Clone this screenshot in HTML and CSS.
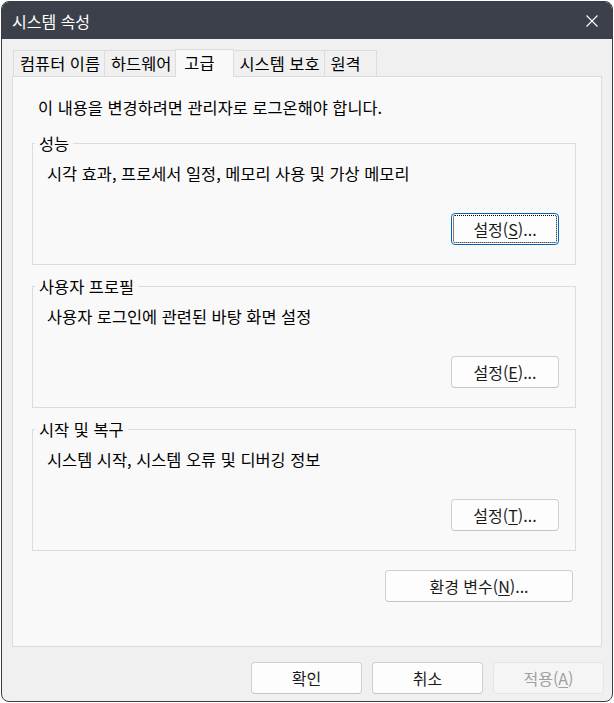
FILE: index.html
```html
<!DOCTYPE html>
<html lang="ko">
<head>
  <meta charset="UTF-8">
  <title>시스템 속성</title>
  <link rel="stylesheet" href="styles.css">
</head>
<body>
  <div class="window">
    <!-- Title bar -->
    <div class="titlebar">
      <span class="title">시스템 속성</span>
      <svg class="close" width="12" height="12" viewBox="0 0 12 12">
        <path d="M0.5 0.5 L11.5 11.5 M11.5 0.5 L0.5 11.5" stroke="#fff" stroke-width="1.1" fill="none"/>
      </svg>
    </div>

    <div class="content">
      <!-- Tabs -->
      <div class="tabs">
        <div class="tab">컴퓨터 이름</div>
        <div class="tab">하드웨어</div>
        <div class="tab active">고급</div>
        <div class="tab">시스템 보호</div>
        <div class="tab">원격</div>
      </div>

      <div class="panel">
        <p class="notice">이 내용을 변경하려면 관리자로 로그온해야 합니다.</p>

        <fieldset class="group">
          <legend>성능</legend>
          <p class="desc">시각 효과, 프로세서 일정, 메모리 사용 및 가상 메모리</p>
          <div class="group-actions">
            <button class="button focused">설정(<u>S</u>)...</button>
          </div>
        </fieldset>

        <fieldset class="group">
          <legend>사용자 프로필</legend>
          <p class="desc">사용자 로그인에 관련된 바탕 화면 설정</p>
          <div class="group-actions">
            <button class="button">설정(<u>E</u>)...</button>
          </div>
        </fieldset>

        <fieldset class="group">
          <legend>시작 및 복구</legend>
          <p class="desc">시스템 시작, 시스템 오류 및 디버깅 정보</p>
          <div class="group-actions">
            <button class="button">설정(<u>T</u>)...</button>
          </div>
        </fieldset>

        <div class="env-row">
          <button class="button wide">환경 변수(<u>N</u>)...</button>
        </div>
      </div>

      <!-- Dialog buttons -->
      <div class="footer">
        <button class="button dialog">확인</button>
        <button class="button dialog">취소</button>
        <button class="button dialog" disabled>적용(<u>A</u>)</button>
      </div>
    </div>
  </div>
</body>
</html>
```

FILE: styles.css
```css
* {
  margin: 0;
  padding: 0;
  box-sizing: border-box;
}

body {
  background: #fff;
  font-family: "Noto Sans CJK KR", "Noto Sans", sans-serif;
  font-size: 16.4px;
  line-height: 20px;
  color: #000;
}

/* Window frame */
.window {
  margin: 1px 0 0 1px;
  width: 612px;
  height: 701px;
  border: 1px solid #3a3d46;
  border-radius: 8px;
  overflow: hidden;
  display: flex;
  flex-direction: column;
  background: #f0f0f0;
}

.titlebar {
  height: 37px;
  flex: none;
  background: #3c404b;
  color: #fff;
  display: flex;
  align-items: center;
  justify-content: space-between;
  padding: 0 14px 0 10px;
}

.title {
  font-size: 16px;
}

.content {
  flex: 1;
  display: flex;
  flex-direction: column;
  padding-top: 10px;
}

/* Tabs */
.tabs {
  display: flex;
  align-items: flex-end;
  height: 27px;
  padding-left: 11px;
}

.tab {
  height: 26px;
  min-width: 53px;
  padding: 0 4px 0 6px;
  margin-right: -1px;
  border: 1px solid #dcdcdc;
  border-bottom: none;
  background: #f0f0f0;
  line-height: 24px;
  white-space: nowrap;
}

.tab.active {
  position: relative;
  z-index: 1;
  height: 28px;
  margin-bottom: -1px;
  padding: 0 18px 0 8px;
  background: #f9f9f9;
  line-height: 24px;
}

/* Tab page */
.panel {
  flex: 1;
  margin: 0 10px;
  background: #f9f9f9;
  border: 1px solid #dcdcdc;
  padding: 20px 25px 0 19px;
}

.notice {
  margin-left: 6px;
}

.group {
  border: 1px solid #dcdcdc;
  padding: 0 16px 19px 14px;
  margin-top: 16px;
}

.group + .group {
  margin-top: 11px;
}

.group legend {
  padding: 0 4px;
  margin-left: -12px;
}

.desc {
  margin-top: 10px;
}

.group-actions {
  display: flex;
  justify-content: flex-end;
  margin-top: 30px;
}

.env-row {
  display: flex;
  justify-content: flex-end;
  margin: 19px 3px 0 0;
}

/* Push buttons */
.button {
  font-family: inherit;
  font-size: 16px;
  color: #1a1a1a;
  width: 108px;
  height: 32px;
  background: #fdfdfd;
  border: 1px solid #d0d0d0;
  border-bottom-color: #c4c4c4;
  border-radius: 4px;
}

.button u {
  text-underline-offset: 2px;
}

.button.focused {
  border-color: #0067c0;
  outline: 1px dotted #000;
  outline-offset: -3px;
}

.button.wide {
  width: 188px;
}

.button.dialog {
  width: 111px;
}

.button:disabled {
  background: #f5f5f5;
  border-color: #e5e5e5;
  color: #a0a0a0;
}

.footer {
  display: flex;
  justify-content: flex-end;
  gap: 10px;
  padding: 15px 8px 7px 0;
}
```
